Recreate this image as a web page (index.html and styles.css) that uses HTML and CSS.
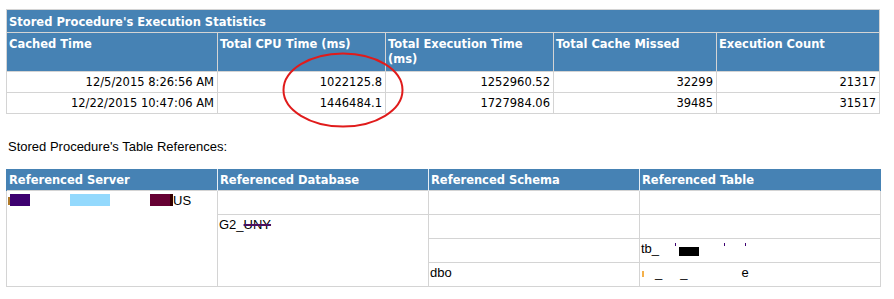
FILE: index.html
```html
<!DOCTYPE html>
<html lang="en">
<head>
    <meta charset="UTF-8">
    <title>Stored Procedure Statistics</title>
    <link rel="stylesheet" href="styles.css">
</head>
<body>
    <div class="page">
        <table class="stats">
            <colgroup>
                <col class="c-wide">
                <col class="c-mid">
                <col class="c-mid">
                <col class="c-narrow">
                <col class="c-narrow">
            </colgroup>
            <tr class="title-row">
                <td colspan="5">Stored Procedure's Execution Statistics</td>
            </tr>
            <tr class="head-row">
                <th>Cached Time</th>
                <th>Total CPU Time (ms)</th>
                <th>Total Execution Time (ms)</th>
                <th>Total Cache Missed</th>
                <th>Execution Count</th>
            </tr>
            <tr class="data-row">
                <td>12/5/2015 8:26:56 AM</td>
                <td>1022125.8</td>
                <td>1252960.52</td>
                <td>32299</td>
                <td>21317</td>
            </tr>
            <tr class="data-row">
                <td>12/22/2015 10:47:06 AM</td>
                <td>1446484.1</td>
                <td>1727984.06</td>
                <td>39485</td>
                <td>31517</td>
            </tr>
        </table>

        <!-- пометка красным овалом -->
        <svg class="mark" width="126" height="80" viewBox="0 0 126 80">
            <ellipse cx="61" cy="38" rx="59.5" ry="36.5" fill="none" stroke="#e01b1b" stroke-width="2"/>
        </svg>

        <p class="caption">Stored Procedure's Table References:</p>

        <table class="refs">
            <colgroup>
                <col class="r-col">
                <col class="r-col">
                <col class="r-col">
                <col class="r-last">
            </colgroup>
            <tr class="refs-head">
                <th>Referenced Server</th>
                <th>Referenced Database</th>
                <th>Referenced Schema</th>
                <th>Referenced Table</th>
            </tr>
            <tr>
                <td rowspan="4"><span class="tick"></span><span class="blot blot-purple"></span><span class="blot blot-sky"></span><span class="blot blot-wine"></span><span class="blot-edge"></span>US</td>
                <td></td>
                <td></td>
                <td></td>
            </tr>
            <tr>
                <td rowspan="3">G2_<span class="struck">UNY</span></td>
                <td></td>
                <td></td>
            </tr>
            <tr>
                <td></td>
                <td>tb_<span class="dot dot-1"></span><span class="blot blot-black"></span><span class="dot dot-2"></span><span class="dot dot-3"></span></td>
            </tr>
            <tr>
                <td>dbo</td>
                <td><span class="tick tick-orange"></span><span class="under u-1">_</span><span class="under u-2">_</span><span class="under u-3">e</span></td>
            </tr>
        </table>
    </div>
</body>
</html>
```

FILE: styles.css
```css
/* общие стили */
body {
    margin: 0;
    background: #fff;
    color: #000;
}

.page {
    position: relative;
    padding: 9px 0 0 6px;
}

/* таблица статистики */
.stats {
    width: 874px;
    border-collapse: collapse;
    table-layout: fixed;
    border: 1px solid #d4d4d4;
    font-family: "DejaVu Sans", Verdana, sans-serif;
}

.c-wide { width: 211px; }
.c-mid { width: 168px; }
.c-narrow { width: 163px; }

.stats td,
.stats th {
    border: 1px solid #d4d4d4;
    padding: 0;
}

.title-row td {
    height: 21px;
    background-color: #4682b4;
    color: #fff;
    font-weight: bold;
    font-size: 11.5px;
    padding: 1px 0 0 2px;
}

.head-row th {
    height: 34px;
    background-color: #4682b4;
    color: #fff;
    font-size: 11.5px;
    font-weight: bold;
    text-align: left;
    vertical-align: top;
    line-height: 15px;
    padding: 4px 4px 0 2px;
}

.data-row td {
    height: 20px;
    font-size: 11.5px;
    text-align: right;
    padding-right: 3px;
}

.mark {
    position: absolute;
    left: 282px;
    top: 52px;
}

.caption {
    margin: 25px 0 0 2px;
    height: 30px;
    font-family: "Liberation Sans", Arial, sans-serif;
    font-size: 13px;
    line-height: 15px;
}

/* таблица ссылок */
.refs {
    width: 874px;
    border-collapse: collapse;
    table-layout: fixed;
    font-family: "Liberation Sans", Arial, sans-serif;
    font-size: 13px;
}

.r-col { width: 211px; }
.r-last { width: 241px; }

.refs td {
    height: 21px;
    border: 1px solid #d4d4d4;
    vertical-align: top;
    padding: 2px 0 0 1px;
    line-height: 15px;
    white-space: nowrap;
}

.refs-head th {
    height: 21px;
    background-color: #4682b4;
    color: #fff;
    font-family: "DejaVu Sans", Verdana, sans-serif;
    font-size: 11.5px;
    font-weight: bold;
    text-align: left;
    padding: 0 0 0 2px;
    border-left: 1px solid #e6eef5;
    border-right: 1px solid #e6eef5;
}

.refs-head th:first-child { border-left-color: #4682b4; }
.refs-head th:last-child { border-right-color: #4682b4; }

/* закрашенные куски */
.blot {
    display: inline-block;
    height: 12px;
    vertical-align: -1px;
}

.tick {
    display: inline-block;
    width: 2px;
    height: 8px;
    background: #b07a2a;
    vertical-align: 0;
}

.blot-purple {
    width: 20px;
    background: #3d0070;
}

.blot-sky {
    width: 40px;
    margin-left: 40px;
    background: #93d9fd;
}

.blot-wine {
    width: 20px;
    margin-left: 40px;
    background: #660033;
}

.blot-edge {
    display: inline-block;
    width: 3px;
    height: 12px;
    background: #330000;
    vertical-align: -1px;
}

.struck {
    text-decoration: line-through;
    text-decoration-color: #4b1060;
    text-decoration-thickness: 2px;
}

.blot-black {
    width: 20px;
    height: 9px;
    background: #000;
    vertical-align: -3px;
}

.dot {
    display: inline-block;
    width: 1px;
    height: 3px;
    background: #3d0070;
    vertical-align: 7px;
}

.dot-1 { margin-left: 16px; margin-right: 3px; }
.dot-2 { margin-left: 25px; }
.dot-3 { margin-left: 20px; }

.tick-orange {
    background: #f4b04a;
    height: 6px;
    margin-left: 1px;
}

.under {
    display: inline-block;
}

.u-1 { margin-left: 11px; }
.u-2 { margin-left: 18px; }
.u-3 { margin-left: 54px; }
```
